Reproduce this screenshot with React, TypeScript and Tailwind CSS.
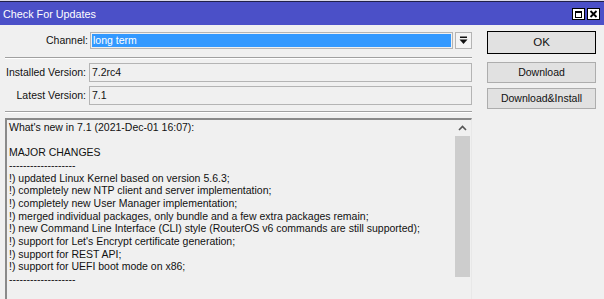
import React from 'react';

const FONT = { fontFamily: '"Liberation Sans", Arial, sans-serif' };

const DASHES = '-------------------';

const NOTES = [
  "What's new in 7.1 (2021-Dec-01 16:07):",
  '',
  'MAJOR CHANGES',
  DASHES,
  '!) updated Linux Kernel based on version 5.6.3;',
  '!) completely new NTP client and server implementation;',
  '!) completely new User Manager implementation;',
  '!) merged individual packages, only bundle and a few extra packages remain;',
  '!) new Command Line Interface (CLI) style (RouterOS v6 commands are still supported);',
  "!) support for Let's Encrypt certificate generation;",
  '!) support for REST API;',
  '!) support for UEFI boot mode on x86;',
  DASHES,
  '',
];

const Separator: React.FC = () => (
  <div className="h-[2px] border-t border-[#a0a0a0] border-b border-b-white" />
);

const Field: React.FC<{ label: string; value: string }> = ({ label, value }) => (
  <div className="flex items-center h-[19px]">
    <div className="w-[83px] pr-[2px] text-right text-[#111] whitespace-nowrap">{label}</div>
    <div className="flex-1 h-[19px] ml-[1px] border border-[#b4b4b4] bg-[#f0f0f0] px-[2px] flex items-center text-[#111]">
      {value}
    </div>
  </div>
);

const WinButton: React.FC<{ children: React.ReactNode; focused?: boolean }> = ({ children, focused }) => (
  <div
    className={
      focused
        ? 'h-[23px] flex items-center justify-center bg-[#e1e1e1] border border-black text-[#111]'
        : 'h-[21px] flex items-center justify-center bg-[#e1e1e1] border border-[#adadad] text-[#111]'
    }
  >
    {children}
  </div>
);

export default function App() {
  return (
    <div className="w-[604px] h-[299px] overflow-hidden bg-[#f0f0f0] text-[10.5px]" style={FONT}>
      {/* title bar */}
      <div className="h-[25px] border-t border-t-[#d8d8e8] bg-[#4b50c8] shadow-[inset_0_1px_0_#20204a] flex items-center pl-[3px] pr-[4px]">
        <span className="text-white text-[10.8px] flex-1 pt-[3px]">Check For Updates</span>
        <div className="flex gap-[2px] pt-[2px]">
          <div className="w-[13px] h-[12px] bg-white border border-black flex items-center justify-center">
            <div className="w-[7px] h-[7px] border border-black border-t-2" />
          </div>
          <div className="w-[13px] h-[12px] bg-white border border-black flex items-center justify-center">
            <svg width="9" height="8" viewBox="0 0 9 8">
              <path d="M1.5 1 L7.5 7 M7.5 1 L1.5 7" stroke="#000" strokeWidth="1.8" />
            </svg>
          </div>
        </div>
      </div>

      <div className="flex pl-[5px] pt-[6px]">
        {/* left column */}
        <div className="w-[467px] flex flex-col">
          <div className="flex items-center h-[17px] mt-[1px]">
            <div className="w-[85px] pr-[2px] text-right text-[#111]">Channel:</div>
            <div className="flex-1 h-[17px] border border-[#b4b4b4] p-[1px]">
              <div className="h-full bg-[#3399ff] text-white flex items-center px-[1px] leading-none">long term</div>
            </div>
            <div className="w-[17px] h-[17px] ml-[2px] border border-[#b4b4b4] bg-[#f4f4f4] flex items-center justify-center">
              <svg width="9" height="9" viewBox="0 0 9 9">
                <rect x="1" y="0.5" width="7" height="1.5" fill="#111" />
                <path d="M0.5 3.5 H8.5 L4.5 8 Z" fill="#111" />
              </svg>
            </div>
          </div>

          <div className="mt-[8px]">
            <Separator />
          </div>

          <div className="mt-[4px] flex flex-col gap-[4px]">
            <Field label="Installed Version:" value="7.2rc4" />
            <Field label="Latest Version:" value="7.1" />
          </div>

          <div className="mt-[6px]">
            <Separator />
          </div>

          {/* release notes */}
          <div className="mt-[5px] h-[190px] flex border-t-2 border-l-2 border-t-[#8a8a8a] border-l-[#8a8a8a] border-r border-r-[#e8e8e8] bg-[#f0f0f0]">
            <div className="flex-1 pl-[2px] pt-[1px] text-[#111] leading-[12.67px] whitespace-pre">
              {NOTES.map((line, i) => (
                <div key={i} className="h-[12.67px]">
                  {line}
                </div>
              ))}
            </div>
            <div className="w-[17px] flex flex-col items-center bg-[#f0f0f0]">
              <div className="h-[16px] flex items-center justify-center">
                <svg width="9" height="6" viewBox="0 0 9 6">
                  <path d="M1 5 L4.5 1.5 L8 5" fill="none" stroke="#555" strokeWidth="1.6" />
                </svg>
              </div>
              <div className="w-[15px] h-[141px] bg-[#cdcdcd]" />
            </div>
          </div>
        </div>

        {/* right column */}
        <div className="ml-[15px] w-[109px] flex flex-col">
          <WinButton focused>
            <span className="text-[11.5px]">OK</span>
          </WinButton>
          <div className="mt-[8px] flex flex-col gap-[5px]">
            <WinButton>Download</WinButton>
            <WinButton>Download&amp;Install</WinButton>
          </div>
        </div>
      </div>
    </div>
  );
}
